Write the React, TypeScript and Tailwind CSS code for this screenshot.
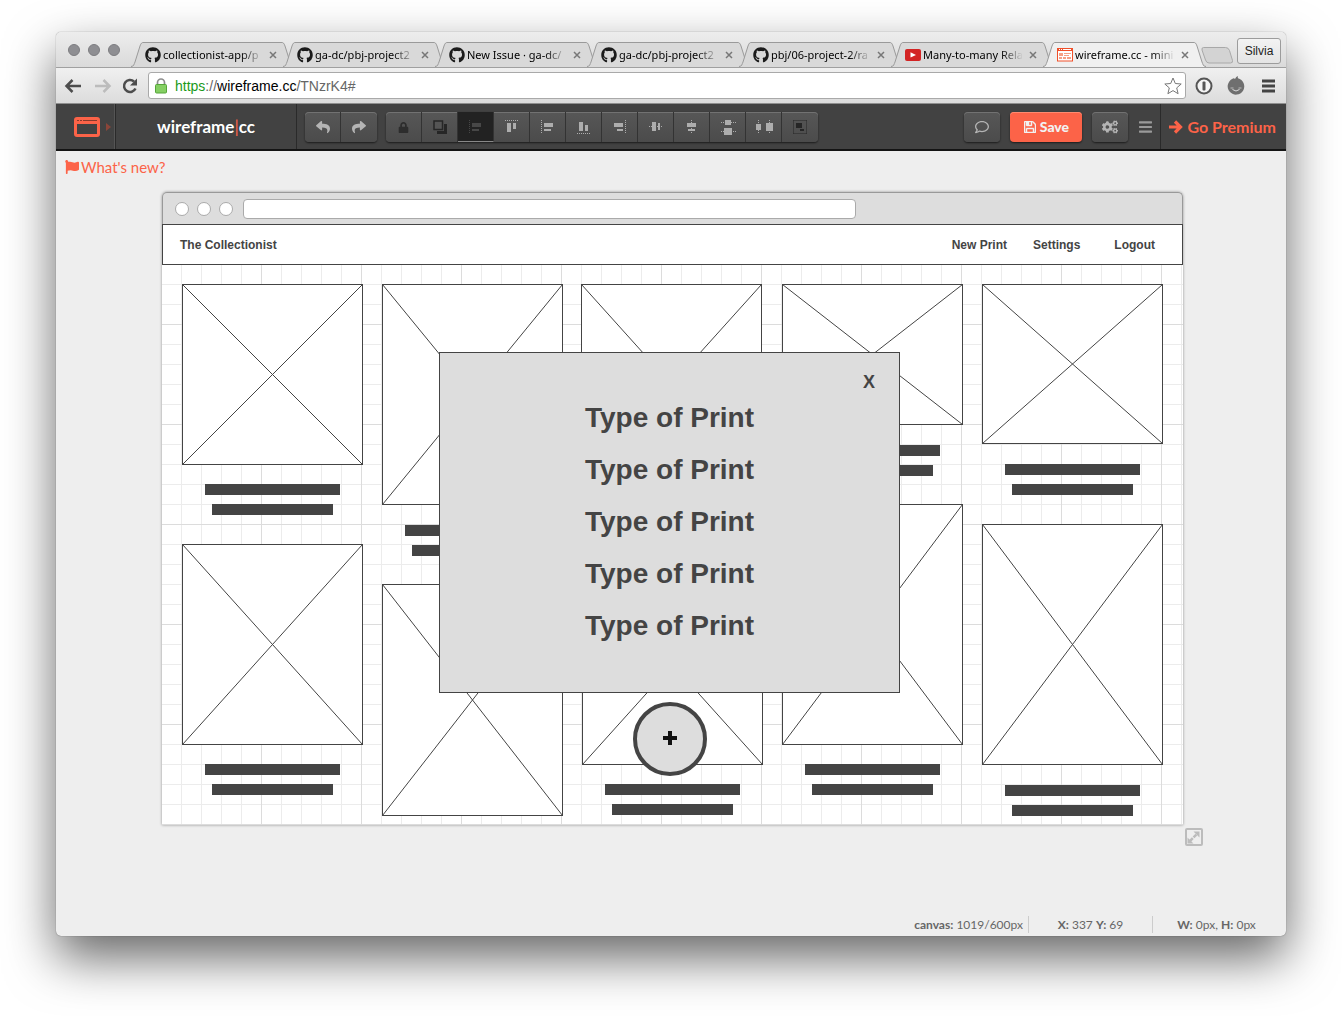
import React from "react";
import { FaGithub, FaReply, FaShare, FaLock, FaRegComment, FaCogs, FaBars, FaFlag } from "react-icons/fa";

const arial = "font-['Liberation_Sans',sans-serif]";

function Favicon({ kind }: { kind: string }) {
  if (kind === "youtube")
    return (
      <svg className="h-4 w-4 shrink-0" viewBox="0 0 16 16" aria-hidden="true">
        <rect x="0" y="2" width="16" height="12" rx="2" fill="#d32424" />
        <path d="M5.5 5.2v5.4L11 8z" fill="#fff" />
      </svg>
    );
  if (kind === "wireframe")
    return (
      <svg className="h-4 w-4 shrink-0" viewBox="0 0 16 16" aria-hidden="true">
        <rect x="0.5" y="1.5" width="15" height="12.5" fill="#fff" stroke="#f0502a" />
        <path d="M0 1h16v3H0z" fill="#f0502a" />
        <path d="M2 2h1v1H2zM4 2h1v1H4zM6 2h8v1H6z" fill="#fff" />
        <path d="M2 6h4v3H2zM7 6h7v1H7zM7 8h5v1H7zM2 10h3v2H2zM6 10h3v2H6zM10 10h4v2h-4z" fill="#f6a085" />
      </svg>
    );
  return <FaGithub className="h-4 w-4 shrink-0 text-[#1b1b1b]" />;
}

const tabs = [
  { title: "collectionist-app/p", icon: "github" },
  { title: "ga-dc/pbj-project2", icon: "github" },
  { title: "New Issue · ga-dc/", icon: "github" },
  { title: "ga-dc/pbj-project2", icon: "github" },
  { title: "pbj/06-project-2/ra", icon: "github" },
  { title: "Many-to-many Rela", icon: "youtube" },
  { title: "wireframe.cc - mini", icon: "wireframe", active: true },
];

function Tab({ title, icon, active, first }: { title: string; icon: string; active?: boolean; first?: boolean }) {
  const fill = active ? "#f0f0f0" : "#d9d9d9";
  return (
    <div className={`flex h-[25px] min-w-0 flex-1 ${first ? "" : "-ml-[11px]"} ${active ? "relative z-10 -mb-px" : ""}`}>
      <svg className="h-full w-3 shrink-0" viewBox="0 0 12 25" aria-hidden="true">
        <path d="M0 25C3 25 3 22 4 20L9 4C10 1 11 .5 12 .5V25z" fill={fill} />
        <path d="M0 24.5C3 24.5 3 22 4 20L9 4C10 1 11 .5 12 .5" fill="none" stroke="#9a9a9a" />
      </svg>
      <div className={`flex min-w-0 flex-1 items-center border-t border-[#9a9a9a] ${active ? "bg-[#f0f0f0]" : "bg-[#d9d9d9]"}`}>
        <span className="ml-0.5"><Favicon kind={icon} /></span>
        <a href="#" className="ml-0.5 min-w-0 flex-1 whitespace-nowrap text-[11px] text-black [mask-image:linear-gradient(to_right,black_78%,transparent)]">
          {title}
        </a>
        <button aria-label={`Close ${title}`} className="mr-[3px] ml-1 flex h-3 w-3 items-center justify-center">
          <svg className="h-2 w-2" viewBox="0 0 8 8"><path d="M1 1l6 6M7 1L1 7" stroke="#777" strokeWidth="1.5" /></svg>
        </button>
      </div>
      <svg className="h-full w-3 shrink-0" viewBox="0 0 12 25" aria-hidden="true">
        <path d="M12 25C9 25 9 22 8 20L3 4C2 1 1 .5 0 .5V25z" fill={fill} />
        <path d="M12 24.5C9 24.5 9 22 8 20L3 4C2 1 1 .5 0 .5" fill="none" stroke="#9a9a9a" />
      </svg>
    </div>
  );
}

function TabStrip() {
  return (
    <div className="flex h-9 items-end rounded-t-[5px] border-b border-[#a0a0a0] bg-linear-to-b from-[#ededed] to-[#dadada]">
      <div className="ml-3 flex gap-2 self-center">
        {[0, 1, 2].map((i) => <span key={i} className="h-3 w-3 rounded-full border border-[#7c7c80] bg-[#8e8e92]" />)}
      </div>
      <div className="ml-[11px] flex min-w-0 flex-1">
        {tabs.map((t, i) => <Tab key={i} {...t} first={i === 0} />)}
      </div>
      <button aria-label="New tab" className="-ml-[5px] mb-[3px]">
        <svg className="h-[17px] w-8" viewBox="0 0 32 17">
          <path d="M2.5.5h22q3 0 4 3l3 10q.5 2.5-2 2.5H8q-2.500 0-3.500-3l-3.500-10Q.5.5 2.500.5z" fill="#d3d3d3" stroke="#a8a8a8" />
        </svg>
      </button>
      <button className={`mr-[5px] mb-[3px] ml-1 h-[26px] w-11 rounded-[3px] border border-[#9c9c9c] bg-linear-to-b from-[#f3f3f3] to-[#e4e4e4] text-xs text-[#222] ${arial}`}>Silvia</button>
    </div>
  );
}

function AddressBar() {
  return (
    <div className={`flex h-9 items-center border-b border-[#8f8f8f] bg-linear-to-b from-[#f0f0f0] to-[#dcdcdc] px-2 ${arial}`}>
      <button aria-label="Back">
        <svg className="h-5 w-5" viewBox="0 0 20 20" fill="none" stroke="#4d4d4d" strokeWidth="2.500"><path d="M17 10H3M8.500 4L2.500 10l6 6" /></svg>
      </button>
      <button aria-label="Forward" className="ml-2">
        <svg className="h-5 w-5" viewBox="0 0 20 20" fill="none" stroke="#bcbcbc" strokeWidth="2.500"><path d="M3 10h14M11.500 4l6 6-6 6" /></svg>
      </button>
      <button aria-label="Reload" className="ml-2">
        <svg className="h-5 w-5" viewBox="0 0 20 20"><path d="M15.500 12.500A6 6 0 1 1 14 5.500" fill="none" stroke="#4d4d4d" strokeWidth="2.500" /><path d="M17 2.500v7h-7z" fill="#4d4d4d" /></svg>
      </button>
      <div className="ml-2 flex h-[27px] min-w-0 flex-1 items-center rounded-[3px] border border-[#a9a9a9] bg-white pr-[3px] pl-1.5">
        <svg className="h-4 w-3 shrink-0" viewBox="0 0 12 16" aria-hidden="true">
          <path d="M2.500 8V4.500a3.500 3.500 0 0 1 7 0V8" fill="none" stroke="#8d8d8d" strokeWidth="1.700" />
          <rect x="0.500" y="6.500" width="11" height="8.500" rx="1" fill="#85cf63" stroke="#55a53a" />
        </svg>
        <div className="ml-2 flex-1 text-sm leading-none text-[#666]">
          <span className="text-[#1a9a1a]">https</span>://<span className="text-black">wireframe.cc</span>/TNzrK4#
        </div>
        <button aria-label="Bookmark this page">
          <svg className="h-[18px] w-[18px]" viewBox="0 0 18 18"><path d="M9 1l2.300 5.500 5.900.5-4.500 3.900 1.400 5.800L9 13.600l-5.100 3.100 1.400-5.800L.8 7l5.900-.5z" fill="#fff" stroke="#777" strokeLinejoin="round" /></svg>
        </button>
      </div>
      <button aria-label="Password manager" className="ml-[9px]">
        <svg className="h-[18px] w-[18px]" viewBox="0 0 18 18"><circle cx="9" cy="9" r="7.500" fill="#f4f4f4" stroke="#555" strokeWidth="2" /><rect x="7.500" y="4.500" width="3" height="9" rx="1" fill="#555" /></svg>
      </button>
      <button aria-label="Extension" className="ml-3.5">
        <svg className="h-[19px] w-[18px]" viewBox="0 0 18 19"><path d="M8 3q1-2.500 3-3-.5 1.500 0 2.300a8.300 8.300 0 1 1-5.500.5Q7 1.800 8 3z" fill="#6f6f6f" /><path d="M5.500 13.500q3.500 3 7 0" fill="none" stroke="#ddd" /><path d="M3.500 12h3M11.500 12h3" stroke="#bbb" /></svg>
      </button>
      <button aria-label="Browser menu" className="mr-[3px] ml-[17px]">
        <svg className="h-3.5 w-[13px]" viewBox="0 0 13 14"><path d="M0 2h13M0 7h13M0 12h13" stroke="#444" strokeWidth="3" /></svg>
      </button>
    </div>
  );
}

type Glyph = { name: string; dim?: boolean; d?: string; dots?: string };

const tools: Glyph[] = [
  { name: "Lock", dim: true },
  { name: "Bring forward", dim: true },
  { name: "Align selection" },
  { name: "Align top", d: "M3 4h4v9H3zM9 4h3v6H9z", dots: "M1 1.500h13" },
  { name: "Align left", d: "M4 4h9v4H4zM4 10h7v2H4z", dots: "M1.500 1v13" },
  { name: "Align bottom", d: "M3 3h4v9H3zM9 6h3v6H9z", dots: "M1 14.500h13" },
  { name: "Align right", d: "M2 4h9v4H2zM5 10h6v2H5z", dots: "M13.500 1v13" },
  { name: "Align middle", d: "M4 3h4v9H4zM10 4h2v7h-2z", dots: "M1 7.500h13" },
  { name: "Align center", d: "M3 4h9v4H3zM4 10h7v2H4z", dots: "M7.500 1v14" },
  { name: "Distribute vertically", d: "M5 1h6v5H5zM4 9h8v7H4z", dots: "M1 3.500h15M1 12.500h15" },
  { name: "Distribute horizontally", d: "M0 5h5v6H0zM10 4h7v8h-7z", dots: "M2.500 1v14M13.500 1v14" },
  { name: "Group", dim: true, d: "M4 4h6v5H4zM8 10h4v2H8z", dots: "M1.500 1.500h13M1.500 14.500h13M1.500 1.500v13M14.500 1.500v13" },
];

function ToolIcon({ tool, index }: { tool: Glyph; index: number }) {
  if (index === 0) return <FaLock className="h-[11px] w-[11px] text-[#2d2d2d]" />;
  if (index === 1)
    return (
      <svg className="h-4 w-4" viewBox="0 0 16 16">
        <path d="M12 5h3v10H5v-3h7z" fill="#262626" />
        <rect x="2" y="2" width="8.500" height="8.500" fill="#555" stroke="#262626" strokeWidth="1.500" />
      </svg>
    );
  const color = index === 2 ? "#474747" : tool.dim ? "#262626" : "#adadad";
  const g = index === 2 ? tools[4] : tool;
  return (
    <svg className="h-4 w-4 overflow-visible" viewBox="0 0 16 16">
      <path d={g.dots} stroke={color} strokeDasharray="1 1" fill="none" />
      <path d={g.d} fill={color} />
    </svg>
  );
}

const dark = "bg-linear-to-b from-[#575757] to-[#4b4b4b]";
const raised = "shadow-[0_1px_2px_rgba(0,0,0,0.6),inset_0_1px_0_#727272]";

function AppBar() {
  return (
    <header className="flex h-[47px] items-stretch border-b-2 border-[#141414] bg-[#424242] font-[Lato,sans-serif]">
      <button aria-label="Page type" className="flex w-[60px] shrink-0 items-center border-r border-[#2a2a2a] pl-[18px] shadow-[inset_-1px_0_0_#555]">
        <svg className="h-5 w-[26px]" viewBox="0 0 26 20"><rect x="1.500" y="1.500" width="23" height="17" rx="1.500" fill="none" stroke="#fc6348" strokeWidth="3" /><path d="M2 3h22v4H2z" fill="#fc6348" /><path d="M3 3.500h2M6 3.500h2M9 3.500h14" stroke="#8b3a2c" /></svg>
        <svg className="ml-[6px] h-2 w-[5px]" viewBox="0 0 5 8"><path d="M0 0l5 4-5 4z" fill="#8b4539" /></svg>
      </button>
      <div className="flex w-[181px] shrink-0 items-center justify-center border-r border-[#2a2a2a] text-[17px] font-bold text-white">
        wireframe<span className="font-normal text-[#fc6348]">|</span>cc
      </div>
      <div className={`my-2 ml-2 flex h-[30px] overflow-hidden rounded ${dark} ${raised}`}>
        <button aria-label="Undo" className="flex w-9 items-center justify-center border-r border-[#333]"><FaReply className="h-3.5 w-3.5 text-[#b4b4b4]" /></button>
        <button aria-label="Redo" className="flex w-9 items-center justify-center"><FaShare className="h-3.5 w-3.5 text-[#b4b4b4]" /></button>
      </div>
      <div className={`my-2 ml-[9px] flex h-[30px] overflow-hidden rounded ${dark} ${raised}`}>
        {tools.map((t, i) => (
          <button key={t.name} aria-label={t.name} className={`flex w-9 items-center justify-center ${i < 11 ? "border-r border-[#333]" : ""} ${i === 2 ? "border-b border-b-[#888] bg-[#222]" : ""}`}>
            <ToolIcon tool={t} index={i} />
          </button>
        ))}
      </div>
      <div className="flex-1" />
      <button aria-label="Comments" className={`my-2 flex h-[30px] w-9 items-center justify-center rounded ${dark} ${raised}`}><FaRegComment className="h-3.5 w-3.5 text-[#b4b4b4]" /></button>
      <button className="my-2 ml-2.5 flex h-[30px] w-[72px] items-center justify-center gap-1 rounded bg-[#fc6348] text-sm font-black text-[#f2f2f2] shadow-[0_1px_2px_rgba(0,0,0,0.6),inset_0_1px_0_#ff8a70]">
        <svg className="h-3 w-3" viewBox="0 128 1536 1536" fill="currentColor" stroke="currentColor" strokeWidth="60" aria-hidden="true">
          <path d="M384 1536h768v-384h-768v384zm896 0h128v-896q0-14-10-38.500t-20-34.500l-281-281q-10-10-34-20t-39-10v416q0 40-28 68t-68 28h-576q-40 0-68-28t-28-68v-416h-128v1280h128v-416q0-40 28-68t68-28h832q40 0 68 28t28 68v416zm-384-928v-320q0-13-9.500-22.500t-22.500-9.500h-192q-13 0-22.500 9.500t-9.500 22.500v320q0 13 9.500 22.500t22.500 9.500h192q13 0 22.500-9.500t9.500-22.500zm640 32v928q0 40-28 68t-68 28h-1344q-40 0-68-28t-28-68v-1344q0-40 28-68t68-28h928q40 0 88 20t76 48l280 280q28 28 48 76t20 88z" />
        </svg>
        Save
      </button>
      <button aria-label="Settings" className={`my-2 ml-2.5 flex h-[30px] w-9 items-center justify-center rounded ${dark} ${raised}`}><FaCogs className="h-4 w-4 text-[#b4b4b4]" /></button>
      <button aria-label="Menu" className="ml-[11px] flex items-center"><FaBars className="h-4 w-[13px] text-[#9a9a9a]" /></button>
      <a href="#" className="ml-2 flex items-center gap-1 border-l border-[#2a2a2a] pr-2.5 pl-2 text-base font-bold text-[#fc6348]">
        <svg className="h-3.5 w-3.5" viewBox="0 0 14 14" aria-hidden="true"><path d="M0 7h11M6 1.500L11.500 7L6 12.500" fill="none" stroke="currentColor" strokeWidth="3.200" /></svg>
        Go Premium
      </a>
    </header>
  );
}

/* Canvas items as [x, y, height], relative to the drawing area's top-left corner. */
const pictures = [
  [20, 60, 181], [220, 60, 221], [419, 60, 201], [620, 60, 141], [820, 60, 160],
  [20, 320, 201], [220, 360, 232], [420, 340, 201], [620, 280, 241], [820, 300, 241],
];

const captions = [
  [43, 260], [243, 301], [643, 221], [843, 240],
  [43, 540], [443, 560], [643, 540], [843, 561],
];

const cellLines =
  "bg-[linear-gradient(to_right,transparent_99px,#dcdcdc_99px),linear-gradient(to_bottom,transparent_99px,#dcdcdc_99px),linear-gradient(to_right,transparent_19px,#ececec_19px),linear-gradient(to_bottom,transparent_19px,#ececec_19px)] bg-[size:100px_100px,100px_100px,20px_20px,20px_20px]";

function Picture({ x, y, h }: { x: number; y: number; h: number }) {
  return (
    <svg className="absolute w-[181px]" style={{ left: x, top: y, height: h }} viewBox={`0 0 181 ${h}`} aria-hidden="true">
      <rect x="0.500" y="0.500" width="180" height={h - 1} fill="#fff" stroke="#444" />
      <path d={`M.5 .5L180.500 ${h - 0.5}M180.500 .5L.5 ${h - 0.5}`} stroke="#444" />
    </svg>
  );
}

function Mockup() {
  return (
    <div className="mx-auto w-[1021px] rounded-t-[5px] shadow-[0_0_3px_rgba(0,0,0,0.4)]">
      <div className="flex h-8 items-center rounded-t-[5px] border border-b-0 border-[#999] bg-[#ddd] pl-3">
        <div className="flex gap-2">
          {[0, 1, 2].map((i) => <span key={i} className="h-3.5 w-3.5 rounded-full border border-[#aaa] bg-white" />)}
        </div>
        <input aria-label="Mockup address" className="ml-2.5 h-5 w-[613px] rounded border border-[#aaa] bg-white px-2 text-xs" />
      </div>
      <div className={`relative h-[601px] bg-white text-[#444] ${arial}`}>
        <div className={`absolute inset-x-0 top-px h-[600px] ${cellLines}`} />
        <nav className="relative flex h-[41px] items-center border border-[#444] bg-white pr-[27px] pl-[17px] text-xs font-bold">
          <span className="flex-1">The Collectionist</span>
          <a href="#">New Print</a>
          <a href="#" className="ml-[26px]">Settings</a>
          <a href="#" className="ml-[34px]">Logout</a>
        </nav>
        {pictures.map(([x, y, h]) => <Picture key={`${x}-${y}`} x={x} y={y} h={h} />)}
        {captions.map(([x, y]) => (
          <div key={`${x}-${y}`} className="absolute flex w-[135px] flex-col items-center gap-[9px]" style={{ left: x, top: y }}>
            <span className="h-[11px] w-full bg-[#444]" />
            <span className="h-[11px] w-[121px] bg-[#444]" />
          </div>
        ))}
        <button aria-label="Add print" className="absolute top-[478px] left-[471px] flex h-[74px] w-[74px] items-center justify-center rounded-full border-4 border-[#444] bg-[#ddd] pb-0.5">
          <svg className="h-3.5 w-3.5" viewBox="0 0 14 14"><path d="M0 7h14M7 0v14" stroke="#111" strokeWidth="4" /></svg>
        </button>
        <div role="dialog" aria-label="Type of print" className="absolute top-32 left-[277px] h-[341px] w-[461px] border border-[#444] bg-[#ddd]">
          <button className="absolute top-[17px] right-6 text-lg leading-6 font-bold">X</button>
          <ul className="mt-[39px] text-center text-[28px] leading-[52px] font-bold">
            {[0, 1, 2, 3, 4].map((i) => <li key={i}>Type of Print</li>)}
          </ul>
        </div>
      </div>
    </div>
  );
}

export default function App() {
  return (
    <div className="flex min-h-screen flex-col bg-white px-14 pt-8 pb-20">
      <div className="flex flex-1 flex-col rounded-[5px] bg-[#eee] shadow-[0_0_1px_rgba(0,0,0,0.6),0_22px_50px_rgba(0,0,0,0.6)]">
        <TabStrip />
        <AddressBar />
        <AppBar />
        <main className="flex flex-1 flex-col font-[Lato,sans-serif]">
          <a href="#" className="ml-[9px] flex h-8 w-fit items-center gap-0.5 text-[15px] text-[#fc6348]"><FaFlag className="h-3.5 w-3.5" />What's new?</a>
          <div className="mt-[9px] pl-[3px]"><Mockup /></div>
          <div className="flex justify-end pt-[3px] pr-[83px]">
            <button aria-label="Resize canvas">
              <svg className="h-[18px] w-[18px]" viewBox="0 0 18 18"><rect x="1" y="1" width="16" height="16" rx="1" fill="none" stroke="#bcbcbc" strokeWidth="2" /><path d="M8.500 3.500h6v6zM2.500 9.500v6h6z" fill="#bcbcbc" /><path d="M5 13l8-8" stroke="#bcbcbc" strokeWidth="2.500" strokeDasharray="4 1" /></svg>
            </button>
          </div>
          <footer className="mt-auto mb-[3px] flex justify-end pr-1.5 text-xs leading-[17px] text-[#666]">
            <div className="border-r border-[#ccc] pr-[5px]"><b>canvas:</b> 1019/600px</div>
            <div className="w-[124px] border-r border-[#ccc] text-center"><b>X:</b> 337 <b>Y:</b> 69</div>
            <div className="w-[127px] text-center"><b>W:</b> 0px, <b>H:</b> 0px</div>
          </footer>
        </main>
      </div>
    </div>
  );
}
